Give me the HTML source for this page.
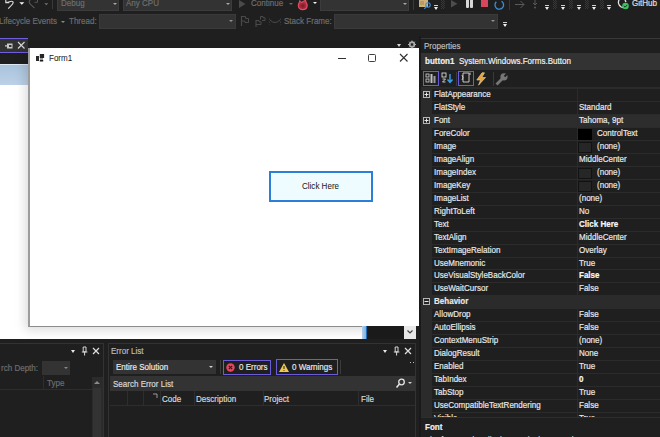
<!DOCTYPE html>
<html><head><meta charset="utf-8"><style>*{margin:0;padding:0;box-sizing:border-box}
html,body{width:660px;height:437px;overflow:hidden;background:#1f1f1f;font-family:"Liberation Sans",sans-serif}
.a{position:absolute;display:block}
.t{position:absolute;white-space:nowrap;font-size:9.5px;line-height:10px;transform:scaleX(.845);transform-origin:0 0;-webkit-text-stroke:0.2px currentColor}
</style></head><body>
<div class="a" style="left:0px;top:0px;width:660px;height:36px;background:#1f1f1f;"></div>
<svg class="a" style="left:0px;top:0px;" width="40" height="11" viewBox="0 0 40 11"><path d="M5.8 -0.5 L5.8 2.6 L9.2 2.6" fill="none" stroke="#dcdcdc" stroke-width="1.1"/><path d="M6.2 2.4 C9 2.6 11 0.2 12.8 1.6 C14 2.8 12.5 4.5 8.2 8.6" fill="none" stroke="#dcdcdc" stroke-width="1.2"/><path d="M37.5 -0.5 L37.5 2.3 L34.5 2.3" fill="none" stroke="#555" stroke-width="1"/><path d="M30.5 -0.5 C28.5 1.5 29 3 30.5 4.3 L34.5 8" fill="none" stroke="#555" stroke-width="1.1"/></svg>
<svg class="a" style="left:19px;top:2px;" width="6" height="4" viewBox="0 0 6 4"><path d="M0.3 0.3 L5.3 0.3 L2.8 2.8 Z" fill="#f4f4f4"/></svg>
<svg class="a" style="left:44px;top:2.5px;" width="5" height="3" viewBox="0 0 5 3"><path d="M0.3 0.3 L4.3 0.3 L2.3 2.3 Z" fill="#707070"/></svg>
<div class="a" style="left:52px;top:0px;width:1px;height:9px;background:#3a3a3a;"></div>
<div class="a" style="left:57px;top:0px;width:62px;height:11px;background:#333333;border:1px solid #3c3c3c;border-top:none"></div>
<div class="t" style="left:60.5px;top:-2.5px;color:#6e6e6e;">Debug</div>
<div class="a" style="left:113px;top:3px;width:0;height:0;border-left:2.0px solid transparent;border-right:2.0px solid transparent;border-top:2.5px solid #a8a8a8"></div>
<div class="a" style="left:123px;top:0px;width:109px;height:11px;background:#333333;border:1px solid #3c3c3c;border-top:none"></div>
<div class="t" style="left:125.5px;top:-2.5px;color:#6e6e6e;">Any CPU</div>
<div class="a" style="left:226px;top:3px;width:0;height:0;border-left:2.0px solid transparent;border-right:2.0px solid transparent;border-top:2.5px solid #a8a8a8"></div>
<svg class="a" style="left:238px;top:0px;" width="9" height="9" viewBox="0 0 9 9"><path d="M1 0 L7.5 4 L1 8 Z" fill="#4a4a4a"/></svg>
<div class="t" style="left:251px;top:-2.5px;color:#6e6e6e;">Continue</div>
<div class="a" style="left:289px;top:3px;width:0;height:0;border-left:2.0px solid transparent;border-right:2.0px solid transparent;border-top:2.5px solid #6a6a6a"></div>
<svg class="a" style="left:297px;top:-0.5px;" width="12" height="11" viewBox="0 0 12 11"><defs><radialGradient id="fl" cx="0.5" cy="0.6" r="0.5"><stop offset="0" stop-color="#7a1828"/><stop offset="1" stop-color="#b8384a"/></radialGradient></defs><path d="M5.8 9.6 C2.8 9.6 1.2 7.5 1.3 5.2 C1.4 3.6 2.4 2.4 2.8 0.8 C3.8 2.2 4.4 2.6 5 2.2 C6 1.4 7.2 0.9 8.6 0.3 C8.4 2.2 10.3 3.4 10.2 5.6 C10 8 8.4 9.6 5.8 9.6 Z" fill="url(#fl)" stroke="#e84a5e" stroke-width="1.1"/></svg>
<div class="a" style="left:312.5px;top:2.2px;width:0;height:0;border-left:2.25px solid transparent;border-right:2.25px solid transparent;border-top:2.8px solid #f4f4f4"></div>
<div class="a" style="left:320px;top:0px;width:89px;height:11px;background:#333333;border:1px solid #3c3c3c;border-top:none"></div>
<div class="a" style="left:403px;top:3px;width:0;height:0;border-left:2.0px solid transparent;border-right:2.0px solid transparent;border-top:2.5px solid #a8a8a8"></div>
<div class="a" style="left:413px;top:0px;width:1px;height:10px;background:#3a3a3a;"></div>
<svg class="a" style="left:418px;top:0px;" width="14" height="10" viewBox="0 0 14 10"><rect x="1" y="0" width="9" height="7" fill="#cdb27a"/><rect x="2" y="1" width="4" height="4" fill="#b89c64"/><circle cx="10" cy="5" r="2.2" fill="none" stroke="#3d8ee0" stroke-width="1.1"/><path d="M8.3 6.7 L6.3 8.8" stroke="#3d8ee0" stroke-width="1.2"/></svg>
<div class="a" style="left:434px;top:5px;width:4px;height:1px;background:#d0d0d0;"></div>
<div class="a" style="left:434px;top:7px;width:0;height:0;border-left:2.0px solid transparent;border-right:2.0px solid transparent;border-top:3px solid #f0f0f0"></div>
<div class="a" style="left:441px;top:0px;width:1px;height:1px;background:#383838;"></div>
<div class="a" style="left:443px;top:0px;width:1px;height:1px;background:#383838;"></div>
<div class="a" style="left:442px;top:1px;width:1px;height:1px;background:#383838;"></div>
<div class="a" style="left:444px;top:1px;width:1px;height:1px;background:#383838;"></div>
<div class="a" style="left:441px;top:2px;width:1px;height:1px;background:#383838;"></div>
<div class="a" style="left:443px;top:2px;width:1px;height:1px;background:#383838;"></div>
<div class="a" style="left:442px;top:3px;width:1px;height:1px;background:#383838;"></div>
<div class="a" style="left:444px;top:3px;width:1px;height:1px;background:#383838;"></div>
<div class="a" style="left:441px;top:4px;width:1px;height:1px;background:#383838;"></div>
<div class="a" style="left:443px;top:4px;width:1px;height:1px;background:#383838;"></div>
<div class="a" style="left:442px;top:5px;width:1px;height:1px;background:#383838;"></div>
<div class="a" style="left:444px;top:5px;width:1px;height:1px;background:#383838;"></div>
<div class="a" style="left:441px;top:6px;width:1px;height:1px;background:#383838;"></div>
<div class="a" style="left:443px;top:6px;width:1px;height:1px;background:#383838;"></div>
<div class="a" style="left:442px;top:7px;width:1px;height:1px;background:#383838;"></div>
<div class="a" style="left:444px;top:7px;width:1px;height:1px;background:#383838;"></div>
<div class="a" style="left:441px;top:8px;width:1px;height:1px;background:#383838;"></div>
<div class="a" style="left:443px;top:8px;width:1px;height:1px;background:#383838;"></div>
<svg class="a" style="left:450px;top:0px;" width="9" height="9" viewBox="0 0 9 9"><path d="M1 0 L7.5 3.8 L1 7.6 Z" fill="#4d4d4d"/></svg>
<div class="a" style="left:466px;top:0px;width:2.6px;height:7.5px;background:#d8d8d8;border-radius:0 0 1px 1px"></div>
<div class="a" style="left:470.4px;top:0px;width:2.6px;height:7.5px;background:#d8d8d8;border-radius:0 0 1px 1px"></div>
<div class="a" style="left:481px;top:0px;width:7px;height:7px;background:#d9455a;"></div>
<svg class="a" style="left:493px;top:0px;" width="13" height="11" viewBox="0 0 13 11"><path d="M8.5 1.2 A4.3 4.3 0 1 1 3.3 1.8" fill="none" stroke="#3c8fd8" stroke-width="1.3"/></svg>
<div class="a" style="left:509px;top:0px;width:1px;height:10px;background:#3a3a3a;"></div>
<svg class="a" style="left:514px;top:0px;" width="13" height="10" viewBox="0 0 13 10"><path d="M1 4.5 L10 4.5 M6.5 1 L10 4.5 L6.5 8" fill="none" stroke="#5a5a5a" stroke-width="1"/></svg>
<svg class="a" style="left:531px;top:0px;" width="8" height="10" viewBox="0 0 8 10"><path d="M4 0 L4 5 M2 3 L4 5 L6 3" fill="none" stroke="#5a5a5a" stroke-width="1"/><circle cx="4" cy="7.5" r="1" fill="#5a5a5a"/></svg>
<div class="a" style="left:545px;top:5px;width:4px;height:1px;background:#d0d0d0;"></div>
<div class="a" style="left:545px;top:7px;width:0;height:0;border-left:2.0px solid transparent;border-right:2.0px solid transparent;border-top:3px solid #f0f0f0"></div>
<div class="a" style="left:553px;top:0px;width:1px;height:1px;background:#383838;"></div>
<div class="a" style="left:555px;top:0px;width:1px;height:1px;background:#383838;"></div>
<div class="a" style="left:554px;top:1px;width:1px;height:1px;background:#383838;"></div>
<div class="a" style="left:556px;top:1px;width:1px;height:1px;background:#383838;"></div>
<div class="a" style="left:553px;top:2px;width:1px;height:1px;background:#383838;"></div>
<div class="a" style="left:555px;top:2px;width:1px;height:1px;background:#383838;"></div>
<div class="a" style="left:554px;top:3px;width:1px;height:1px;background:#383838;"></div>
<div class="a" style="left:556px;top:3px;width:1px;height:1px;background:#383838;"></div>
<div class="a" style="left:553px;top:4px;width:1px;height:1px;background:#383838;"></div>
<div class="a" style="left:555px;top:4px;width:1px;height:1px;background:#383838;"></div>
<div class="a" style="left:554px;top:5px;width:1px;height:1px;background:#383838;"></div>
<div class="a" style="left:556px;top:5px;width:1px;height:1px;background:#383838;"></div>
<div class="a" style="left:553px;top:6px;width:1px;height:1px;background:#383838;"></div>
<div class="a" style="left:555px;top:6px;width:1px;height:1px;background:#383838;"></div>
<div class="a" style="left:554px;top:7px;width:1px;height:1px;background:#383838;"></div>
<div class="a" style="left:556px;top:7px;width:1px;height:1px;background:#383838;"></div>
<div class="a" style="left:553px;top:8px;width:1px;height:1px;background:#383838;"></div>
<div class="a" style="left:555px;top:8px;width:1px;height:1px;background:#383838;"></div>
<div class="a" style="left:561px;top:5px;width:4px;height:1px;background:#d0d0d0;"></div>
<div class="a" style="left:561px;top:7px;width:0;height:0;border-left:2.0px solid transparent;border-right:2.0px solid transparent;border-top:3px solid #f0f0f0"></div>
<div class="a" style="left:569px;top:0px;width:1px;height:1px;background:#383838;"></div>
<div class="a" style="left:571px;top:0px;width:1px;height:1px;background:#383838;"></div>
<div class="a" style="left:570px;top:1px;width:1px;height:1px;background:#383838;"></div>
<div class="a" style="left:572px;top:1px;width:1px;height:1px;background:#383838;"></div>
<div class="a" style="left:569px;top:2px;width:1px;height:1px;background:#383838;"></div>
<div class="a" style="left:571px;top:2px;width:1px;height:1px;background:#383838;"></div>
<div class="a" style="left:570px;top:3px;width:1px;height:1px;background:#383838;"></div>
<div class="a" style="left:572px;top:3px;width:1px;height:1px;background:#383838;"></div>
<div class="a" style="left:569px;top:4px;width:1px;height:1px;background:#383838;"></div>
<div class="a" style="left:571px;top:4px;width:1px;height:1px;background:#383838;"></div>
<div class="a" style="left:570px;top:5px;width:1px;height:1px;background:#383838;"></div>
<div class="a" style="left:572px;top:5px;width:1px;height:1px;background:#383838;"></div>
<div class="a" style="left:569px;top:6px;width:1px;height:1px;background:#383838;"></div>
<div class="a" style="left:571px;top:6px;width:1px;height:1px;background:#383838;"></div>
<div class="a" style="left:570px;top:7px;width:1px;height:1px;background:#383838;"></div>
<div class="a" style="left:572px;top:7px;width:1px;height:1px;background:#383838;"></div>
<div class="a" style="left:569px;top:8px;width:1px;height:1px;background:#383838;"></div>
<div class="a" style="left:571px;top:8px;width:1px;height:1px;background:#383838;"></div>
<div class="a" style="left:577px;top:5px;width:4px;height:1px;background:#d0d0d0;"></div>
<div class="a" style="left:577px;top:7px;width:0;height:0;border-left:2.0px solid transparent;border-right:2.0px solid transparent;border-top:3px solid #f0f0f0"></div>
<div class="a" style="left:585px;top:0px;width:1px;height:1px;background:#383838;"></div>
<div class="a" style="left:587px;top:0px;width:1px;height:1px;background:#383838;"></div>
<div class="a" style="left:586px;top:1px;width:1px;height:1px;background:#383838;"></div>
<div class="a" style="left:588px;top:1px;width:1px;height:1px;background:#383838;"></div>
<div class="a" style="left:585px;top:2px;width:1px;height:1px;background:#383838;"></div>
<div class="a" style="left:587px;top:2px;width:1px;height:1px;background:#383838;"></div>
<div class="a" style="left:586px;top:3px;width:1px;height:1px;background:#383838;"></div>
<div class="a" style="left:588px;top:3px;width:1px;height:1px;background:#383838;"></div>
<div class="a" style="left:585px;top:4px;width:1px;height:1px;background:#383838;"></div>
<div class="a" style="left:587px;top:4px;width:1px;height:1px;background:#383838;"></div>
<div class="a" style="left:586px;top:5px;width:1px;height:1px;background:#383838;"></div>
<div class="a" style="left:588px;top:5px;width:1px;height:1px;background:#383838;"></div>
<div class="a" style="left:585px;top:6px;width:1px;height:1px;background:#383838;"></div>
<div class="a" style="left:587px;top:6px;width:1px;height:1px;background:#383838;"></div>
<div class="a" style="left:586px;top:7px;width:1px;height:1px;background:#383838;"></div>
<div class="a" style="left:588px;top:7px;width:1px;height:1px;background:#383838;"></div>
<div class="a" style="left:585px;top:8px;width:1px;height:1px;background:#383838;"></div>
<div class="a" style="left:587px;top:8px;width:1px;height:1px;background:#383838;"></div>
<div class="a" style="left:592px;top:5px;width:4px;height:1px;background:#d0d0d0;"></div>
<div class="a" style="left:592px;top:7px;width:0;height:0;border-left:2.0px solid transparent;border-right:2.0px solid transparent;border-top:3px solid #f0f0f0"></div>
<div class="a" style="left:600px;top:0px;width:1px;height:1px;background:#383838;"></div>
<div class="a" style="left:602px;top:0px;width:1px;height:1px;background:#383838;"></div>
<div class="a" style="left:601px;top:1px;width:1px;height:1px;background:#383838;"></div>
<div class="a" style="left:603px;top:1px;width:1px;height:1px;background:#383838;"></div>
<div class="a" style="left:600px;top:2px;width:1px;height:1px;background:#383838;"></div>
<div class="a" style="left:602px;top:2px;width:1px;height:1px;background:#383838;"></div>
<div class="a" style="left:601px;top:3px;width:1px;height:1px;background:#383838;"></div>
<div class="a" style="left:603px;top:3px;width:1px;height:1px;background:#383838;"></div>
<div class="a" style="left:600px;top:4px;width:1px;height:1px;background:#383838;"></div>
<div class="a" style="left:602px;top:4px;width:1px;height:1px;background:#383838;"></div>
<div class="a" style="left:601px;top:5px;width:1px;height:1px;background:#383838;"></div>
<div class="a" style="left:603px;top:5px;width:1px;height:1px;background:#383838;"></div>
<div class="a" style="left:600px;top:6px;width:1px;height:1px;background:#383838;"></div>
<div class="a" style="left:602px;top:6px;width:1px;height:1px;background:#383838;"></div>
<div class="a" style="left:601px;top:7px;width:1px;height:1px;background:#383838;"></div>
<div class="a" style="left:603px;top:7px;width:1px;height:1px;background:#383838;"></div>
<div class="a" style="left:600px;top:8px;width:1px;height:1px;background:#383838;"></div>
<div class="a" style="left:602px;top:8px;width:1px;height:1px;background:#383838;"></div>
<div class="a" style="left:607px;top:5px;width:4px;height:1px;background:#d0d0d0;"></div>
<div class="a" style="left:607px;top:7px;width:0;height:0;border-left:2.0px solid transparent;border-right:2.0px solid transparent;border-top:3px solid #f0f0f0"></div>
<svg class="a" style="left:617px;top:0px;" width="13" height="10" viewBox="0 0 13 10"><path d="M2 0 C1 2 1.5 5 3.5 6.5 C4.5 7.3 5 7.5 6 7.5" fill="none" stroke="#e6e6e6" stroke-width="1.4"/><path d="M8 0 L9 2" stroke="#e6e6e6" stroke-width="1.4"/><circle cx="8.5" cy="6" r="3.3" fill="#3cc060"/><path d="M6.8 6 L8.1 7.2 L10.2 4.9" fill="none" stroke="#1f1f1f" stroke-width="0.9"/></svg>
<div class="t" style="left:632px;top:-2px;color:#e0e0e0;">GitHub</div>
<div class="t" style="left:-1px;top:15.5px;color:#6e6e6e;">Lifecycle Events</div>
<div class="a" style="left:61px;top:20.5px;width:0;height:0;border-left:2.0px solid transparent;border-right:2.0px solid transparent;border-top:2px solid #8a8a8a"></div>
<div class="t" style="left:69px;top:15.5px;color:#6e6e6e;">Thread:</div>
<div class="a" style="left:99px;top:13.5px;width:137px;height:15px;background:#333333;border:1px solid #3a3a3a"></div>
<div class="a" style="left:229px;top:20px;width:0;height:0;border-left:2.0px solid transparent;border-right:2.0px solid transparent;border-top:2.5px solid #909090"></div>
<svg class="a" style="left:239px;top:15px;" width="12" height="12" viewBox="0 0 12 12"><path d="M2.5 1 L2.5 11" stroke="#4a4a4a" stroke-width="1.2"/><path d="M2.5 1.5 L6.5 1.5 L6.5 3.5 L9.5 3.5 L9.5 7.5 L6 7.5 L6 6 L2.5 6" fill="none" stroke="#4a4a4a" stroke-width="1"/></svg>
<svg class="a" style="left:254px;top:15px;" width="13" height="13" viewBox="0 0 13 13"><path d="M2 5 L2 12" stroke="#4a4a4a" stroke-width="1.1"/><path d="M2 5.5 L5 5.5 L5 6.8 L7 6.8 L7 9.5 L2 9.5" fill="none" stroke="#4a4a4a" stroke-width="1"/><path d="M6.5 4.5 L6.5 1.5 L9 1.5 L9 2.8 L11 2.8 L11 5.5 L8 5.5" fill="none" stroke="#4a4a4a" stroke-width="1"/></svg>
<svg class="a" style="left:268px;top:16px;" width="14" height="11" viewBox="0 0 14 11"><path d="M2 4 Q7 9 12 4" fill="none" stroke="#4a4a4a" stroke-width="1"/><path d="M1.5 2.5 L1.5 9 M12.5 2.5 L12.5 9" stroke="#3a3a3a" stroke-width="1" stroke-dasharray="1.5 1.5"/></svg>
<div class="t" style="left:284px;top:15.5px;color:#6e6e6e;">Stack Frame:</div>
<div class="a" style="left:334px;top:13.5px;width:164px;height:15px;background:#333333;border:1px solid #3a3a3a"></div>
<div class="a" style="left:491px;top:20px;width:0;height:0;border-left:2.0px solid transparent;border-right:2.0px solid transparent;border-top:2.5px solid #909090"></div>
<div class="a" style="left:503px;top:22px;width:4px;height:1px;background:#d0d0d0;"></div>
<div class="a" style="left:503px;top:24px;width:0;height:0;border-left:2.0px solid transparent;border-right:2.0px solid transparent;border-top:3px solid #f0f0f0"></div>
<div class="a" style="left:0px;top:48px;width:419px;height:291px;background:#ffffff;"></div>
<div class="a" style="left:0px;top:38px;width:28px;height:15px;background:#323232;border-top:1.7px solid #6f5ee0;border-bottom:1.5px solid #6f5ee0"></div>
<svg class="a" style="left:4px;top:41px;" width="10" height="10" viewBox="0 0 10 10"><path d="M1 4.8 L3 4.8" stroke="#c8c8c8" stroke-width="1.2"/><rect x="3" y="2.5" width="5.5" height="5" fill="#c8c8c8"/><rect x="5" y="4" width="2.5" height="2" fill="#323232"/></svg>
<svg class="a" style="left:16px;top:40px;" width="10" height="10" viewBox="0 0 10 10"><path d="M2 2 L8.5 8.5 M8.5 2 L2 8.5" stroke="#d8d8d8" stroke-width="1.1"/></svg>
<div class="a" style="left:0px;top:53px;width:28px;height:11px;background:#1f1f1f;"></div>
<div class="a" style="left:0px;top:64px;width:28px;height:21px;background:linear-gradient(#a9c3dd,#bcd1e7);border-top:1px solid #dde8f2"></div>
<div class="a" style="left:28px;top:48px;width:391px;height:279px;background:#ffffff;border-left:2px solid #9c9c9c;border-bottom:1.5px solid #8c8c8c;box-shadow:-3px 3px 10px rgba(0,0,0,0.14)"></div>
<svg class="a" style="left:35px;top:53px;" width="10" height="10" viewBox="0 0 10 10"><rect x="4.8" y="1" width="4.3" height="4" fill="#262626"/><rect x="5" y="5" width="3" height="2" fill="#9a9a9a"/><rect x="4.8" y="7" width="3.4" height="1.5" fill="#1a1a1a"/><rect x="1" y="3" width="3" height="5" fill="#2a2a2a"/></svg>
<div class="t" style="left:49px;top:52.5px;color:#1a1a1a;-webkit-text-stroke:0.05px #1a1a1a">Form1</div>
<div class="a" style="left:338px;top:58px;width:8px;height:1px;background:#303030;"></div>
<div class="a" style="left:368px;top:54px;width:8px;height:8px;background:transparent;border:1.2px solid #404040;border-radius:1.5px"></div>
<svg class="a" style="left:399px;top:53px;" width="10" height="10" viewBox="0 0 10 10"><path d="M1 1 L8.5 8.5 M8.5 1 L1 8.5" stroke="#303030" stroke-width="1.1"/></svg>
<div class="a" style="left:397px;top:44px;width:0;height:0;border-left:2.5px solid transparent;border-right:2.5px solid transparent;border-top:3px solid #d8d8d8"></div>
<svg class="a" style="left:407px;top:40px;" width="10" height="9" viewBox="0 0 10 9"><circle cx="5" cy="4.5" r="2.5" fill="none" stroke="#b0b0b0" stroke-width="1.3"/><path d="M5 0.5 L5 8.5 M1 4.5 L9 4.5 M2.2 1.7 L7.8 7.3 M7.8 1.7 L2.2 7.3" stroke="#b0b0b0" stroke-width="1"/><circle cx="5" cy="4.5" r="1.2" fill="#1f1f1f"/></svg>
<div class="a" style="left:269px;top:171px;width:104px;height:31px;background:#effcff;border:2px solid #2a7fd8;box-shadow:inset 0 0 0 1px #f8fdff"></div>
<div class="t" style="left:302px;top:181px;color:#222222;-webkit-text-stroke:0.05px #222">Click Here</div>
<div class="a" style="left:362px;top:326px;width:4px;height:13px;background:linear-gradient(90deg,#b4cfe8,#7fb0dc);"></div>
<div class="a" style="left:366px;top:326px;width:1px;height:13px;background:#1c6fb8;"></div>
<div class="a" style="left:367px;top:326px;width:37px;height:13px;background:#1a1a1a;"></div>
<div class="a" style="left:404px;top:326px;width:12px;height:13px;background:#e8e8e8;"></div>
<svg class="a" style="left:406px;top:328px;" width="8" height="8" viewBox="0 0 8 8"><path d="M1.5 2.5 L4 5 L6.5 2.5" fill="none" stroke="#404040" stroke-width="1.2"/></svg>
<div class="a" style="left:416px;top:326px;width:3px;height:13px;background:#1f1f1f;"></div>
<div class="a" style="left:419px;top:36px;width:241px;height:401px;background:#1f1f1f;"></div>
<div class="a" style="left:419px;top:36px;width:2px;height:401px;background:#1a1a1a;"></div>
<div class="a" style="left:421px;top:38px;width:239px;height:1px;background:#383838;"></div>
<div class="t" style="left:424px;top:40.5px;color:#bdbdbd;">Properties</div>
<div class="a" style="left:421px;top:53px;width:239px;height:17px;background:#333333;"></div>
<div class="t" style="left:425px;top:56px;color:#f0f0f0;"><b>button1</b>&nbsp; System.Windows.Forms.Button</div>
<div class="a" style="left:423px;top:71px;width:16px;height:15px;background:#1f1f1f;border:1px solid #6a5bd8"></div>
<svg class="a" style="left:425px;top:73px;" width="12" height="12" viewBox="0 0 12 12"><rect x="1" y="1" width="3" height="3" fill="none" stroke="#d8d8d8" stroke-width="0.8"/><rect x="1" y="6" width="3" height="3" fill="none" stroke="#d8d8d8" stroke-width="0.8"/><rect x="5.5" y="1" width="2" height="9" fill="#bfbfbf"/><rect x="8.5" y="3" width="2" height="7" fill="#9a9a9a"/></svg>
<svg class="a" style="left:441px;top:72px;" width="14" height="14" viewBox="0 0 14 14"><rect x="1" y="1" width="4" height="4" fill="none" stroke="#d8d8d8" stroke-width="0.9"/><path d="M1.5 7 L4.5 7 L1.5 10 L4.5 10" fill="none" stroke="#d8d8d8" stroke-width="0.9"/><path d="M9 2 L9 10 M6.5 7.5 L9 10.5 L11.5 7.5" fill="none" stroke="#3aa0e8" stroke-width="1.4"/></svg>
<div class="a" style="left:456px;top:72px;width:1px;height:14px;background:#3a3a3a;"></div>
<div class="a" style="left:458px;top:71px;width:16px;height:15px;background:#1f1f1f;border:1px solid #6a5bd8"></div>
<svg class="a" style="left:460px;top:72px;" width="12" height="12" viewBox="0 0 12 12"><path d="M3 1 L9 1 L9 10 L3 10 Z" fill="none" stroke="#d8d8d8" stroke-width="0.9"/><path d="M2 3 Q4 6 2 8" fill="none" stroke="#d8d8d8" stroke-width="0.9"/><path d="M10 0.5 L10 3" stroke="#d8d8d8" stroke-width="0.9"/></svg>
<svg class="a" style="left:475px;top:72px;" width="12" height="14" viewBox="0 0 12 14"><path d="M7 0.8 L1.8 8 L5.5 8 L3.5 13.2 L10.5 5.5 L6.8 5.5 L9.5 0.8 Z" fill="#e8a33a" stroke="#f2d6a6" stroke-width="0.6"/></svg>
<div class="a" style="left:493px;top:72px;width:1px;height:14px;background:#3a3a3a;"></div>
<svg class="a" style="left:495px;top:72px;" width="14" height="14" viewBox="0 0 14 14"><path d="M1.5 12.5 L7 7" stroke="#767676" stroke-width="2.8"/><circle cx="9" cy="4.8" r="3.6" fill="#767676"/><path d="M9.5 4.5 L12.5 1.5" stroke="#1f1f1f" stroke-width="2"/></svg>
<div class="a" style="left:421px;top:87px;width:239px;height:330px;background:#2b2b2b;"></div>
<div class="a" style="left:421px;top:87px;width:239px;height:1px;background:#2b2b2b;"></div>
<div class="a" style="left:432px;top:89px;width:228px;height:12px;background:#1f1f1f;"></div>
<div class="a" style="left:577px;top:89px;width:1px;height:12px;background:#2b2b2b;"></div>
<svg class="a" style="left:423px;top:91px;" width="7" height="7" viewBox="0 0 7 7"><rect x="0.5" y="0.5" width="6" height="6" fill="#262626" stroke="#b4b4b4" stroke-width="1"/><path d="M1.5 3.5 L5.5 3.5 M3.5 1.5 L3.5 5.5" stroke="#e8e8e8" stroke-width="1"/></svg>
<div class="t" style="left:434px;top:89.2px;color:#e8e8e8;">FlatAppearance</div>
<div class="a" style="left:432px;top:102px;width:228px;height:12px;background:#1f1f1f;"></div>
<div class="a" style="left:577px;top:102px;width:1px;height:12px;background:#2b2b2b;"></div>
<div class="t" style="left:434px;top:102.2px;color:#e8e8e8;">FlatStyle</div>
<div class="t" style="left:579px;top:102.2px;color:#e8e8e8;">Standard</div>
<div class="a" style="left:432px;top:115px;width:228px;height:12px;background:#2d2d2d;"></div>
<div class="a" style="left:577px;top:115px;width:1px;height:12px;background:#2b2b2b;"></div>
<svg class="a" style="left:423px;top:117px;" width="7" height="7" viewBox="0 0 7 7"><rect x="0.5" y="0.5" width="6" height="6" fill="#262626" stroke="#b4b4b4" stroke-width="1"/><path d="M1.5 3.5 L5.5 3.5 M3.5 1.5 L3.5 5.5" stroke="#e8e8e8" stroke-width="1"/></svg>
<div class="t" style="left:434px;top:115.2px;color:#e8e8e8;">Font</div>
<div class="t" style="left:579px;top:115.2px;color:#e8e8e8;">Tahoma, 9pt</div>
<div class="a" style="left:432px;top:128px;width:228px;height:12px;background:#1f1f1f;"></div>
<div class="a" style="left:577px;top:128px;width:1px;height:12px;background:#2b2b2b;"></div>
<div class="t" style="left:434px;top:128.2px;color:#e8e8e8;">ForeColor</div>
<div class="a" style="left:578px;top:129px;width:14px;height:10.5px;background:#000000;"></div>
<div class="t" style="left:597px;top:128.2px;color:#e8e8e8;">ControlText</div>
<div class="a" style="left:432px;top:141px;width:228px;height:12px;background:#1f1f1f;"></div>
<div class="a" style="left:577px;top:141px;width:1px;height:12px;background:#2b2b2b;"></div>
<div class="t" style="left:434px;top:141.2px;color:#e8e8e8;">Image</div>
<div class="a" style="left:578px;top:142px;width:14px;height:10.5px;background:#262626;border:1px solid #121212"></div>
<div class="t" style="left:597px;top:141.2px;color:#e8e8e8;">(none)</div>
<div class="a" style="left:432px;top:154px;width:228px;height:12px;background:#1f1f1f;"></div>
<div class="a" style="left:577px;top:154px;width:1px;height:12px;background:#2b2b2b;"></div>
<div class="t" style="left:434px;top:154.2px;color:#e8e8e8;">ImageAlign</div>
<div class="t" style="left:579px;top:154.2px;color:#e8e8e8;">MiddleCenter</div>
<div class="a" style="left:432px;top:167px;width:228px;height:12px;background:#1f1f1f;"></div>
<div class="a" style="left:577px;top:167px;width:1px;height:12px;background:#2b2b2b;"></div>
<div class="t" style="left:434px;top:167.2px;color:#e8e8e8;">ImageIndex</div>
<div class="a" style="left:578px;top:168px;width:14px;height:10.5px;background:#262626;border:1px solid #121212"></div>
<div class="t" style="left:597px;top:167.2px;color:#e8e8e8;">(none)</div>
<div class="a" style="left:432px;top:180px;width:228px;height:12px;background:#1f1f1f;"></div>
<div class="a" style="left:577px;top:180px;width:1px;height:12px;background:#2b2b2b;"></div>
<div class="t" style="left:434px;top:180.2px;color:#e8e8e8;">ImageKey</div>
<div class="a" style="left:578px;top:181px;width:14px;height:10.5px;background:#262626;border:1px solid #121212"></div>
<div class="t" style="left:597px;top:180.2px;color:#e8e8e8;">(none)</div>
<div class="a" style="left:432px;top:193px;width:228px;height:12px;background:#1f1f1f;"></div>
<div class="a" style="left:577px;top:193px;width:1px;height:12px;background:#2b2b2b;"></div>
<div class="t" style="left:434px;top:193.2px;color:#e8e8e8;">ImageList</div>
<div class="t" style="left:579px;top:193.2px;color:#e8e8e8;">(none)</div>
<div class="a" style="left:432px;top:206px;width:228px;height:12px;background:#1f1f1f;"></div>
<div class="a" style="left:577px;top:206px;width:1px;height:12px;background:#2b2b2b;"></div>
<div class="t" style="left:434px;top:206.2px;color:#e8e8e8;">RightToLeft</div>
<div class="t" style="left:579px;top:206.2px;color:#e8e8e8;">No</div>
<div class="a" style="left:432px;top:219px;width:228px;height:12px;background:#1f1f1f;"></div>
<div class="a" style="left:577px;top:219px;width:1px;height:12px;background:#2b2b2b;"></div>
<div class="t" style="left:434px;top:219.2px;color:#e8e8e8;">Text</div>
<div class="t" style="left:579px;top:219.2px;color:#f8f8f8;font-weight:bold">Click Here</div>
<div class="a" style="left:432px;top:232px;width:228px;height:12px;background:#1f1f1f;"></div>
<div class="a" style="left:577px;top:232px;width:1px;height:12px;background:#2b2b2b;"></div>
<div class="t" style="left:434px;top:232.2px;color:#e8e8e8;">TextAlign</div>
<div class="t" style="left:579px;top:232.2px;color:#e8e8e8;">MiddleCenter</div>
<div class="a" style="left:432px;top:245px;width:228px;height:12px;background:#1f1f1f;"></div>
<div class="a" style="left:577px;top:245px;width:1px;height:12px;background:#2b2b2b;"></div>
<div class="t" style="left:434px;top:245.2px;color:#e8e8e8;">TextImageRelation</div>
<div class="t" style="left:579px;top:245.2px;color:#e8e8e8;">Overlay</div>
<div class="a" style="left:432px;top:258px;width:228px;height:11px;background:#1f1f1f;"></div>
<div class="a" style="left:577px;top:258px;width:1px;height:11px;background:#2b2b2b;"></div>
<div class="t" style="left:434px;top:258.2px;color:#e8e8e8;">UseMnemonic</div>
<div class="t" style="left:579px;top:258.2px;color:#e8e8e8;">True</div>
<div class="a" style="left:432px;top:270px;width:228px;height:12px;background:#1f1f1f;"></div>
<div class="a" style="left:577px;top:270px;width:1px;height:12px;background:#2b2b2b;"></div>
<div class="t" style="left:434px;top:270.2px;color:#e8e8e8;">UseVisualStyleBackColor</div>
<div class="t" style="left:579px;top:270.2px;color:#f8f8f8;font-weight:bold">False</div>
<div class="a" style="left:432px;top:283px;width:228px;height:12px;background:#1f1f1f;"></div>
<div class="a" style="left:577px;top:283px;width:1px;height:12px;background:#2b2b2b;"></div>
<div class="t" style="left:434px;top:283.2px;color:#e8e8e8;">UseWaitCursor</div>
<div class="t" style="left:579px;top:283.2px;color:#e8e8e8;">False</div>
<svg class="a" style="left:423px;top:298px;" width="7" height="7" viewBox="0 0 7 7"><rect x="0.5" y="0.5" width="6" height="6" fill="#262626" stroke="#b4b4b4" stroke-width="1"/><path d="M1.5 3.5 L5.5 3.5" stroke="#e8e8e8" stroke-width="1"/></svg>
<div class="t" style="left:434px;top:296.2px;color:#e8e8e8;font-weight:bold">Behavior</div>
<div class="a" style="left:432px;top:309px;width:228px;height:12px;background:#1f1f1f;"></div>
<div class="a" style="left:577px;top:309px;width:1px;height:12px;background:#2b2b2b;"></div>
<div class="t" style="left:434px;top:309.2px;color:#e8e8e8;">AllowDrop</div>
<div class="t" style="left:579px;top:309.2px;color:#e8e8e8;">False</div>
<div class="a" style="left:432px;top:322px;width:228px;height:12px;background:#1f1f1f;"></div>
<div class="a" style="left:577px;top:322px;width:1px;height:12px;background:#2b2b2b;"></div>
<div class="t" style="left:434px;top:322.2px;color:#e8e8e8;">AutoEllipsis</div>
<div class="t" style="left:579px;top:322.2px;color:#e8e8e8;">False</div>
<div class="a" style="left:432px;top:335px;width:228px;height:12px;background:#1f1f1f;"></div>
<div class="a" style="left:577px;top:335px;width:1px;height:12px;background:#2b2b2b;"></div>
<div class="t" style="left:434px;top:335.2px;color:#e8e8e8;">ContextMenuStrip</div>
<div class="t" style="left:579px;top:335.2px;color:#e8e8e8;">(none)</div>
<div class="a" style="left:432px;top:348px;width:228px;height:12px;background:#1f1f1f;"></div>
<div class="a" style="left:577px;top:348px;width:1px;height:12px;background:#2b2b2b;"></div>
<div class="t" style="left:434px;top:348.2px;color:#e8e8e8;">DialogResult</div>
<div class="t" style="left:579px;top:348.2px;color:#e8e8e8;">None</div>
<div class="a" style="left:432px;top:361px;width:228px;height:12px;background:#1f1f1f;"></div>
<div class="a" style="left:577px;top:361px;width:1px;height:12px;background:#2b2b2b;"></div>
<div class="t" style="left:434px;top:361.2px;color:#e8e8e8;">Enabled</div>
<div class="t" style="left:579px;top:361.2px;color:#e8e8e8;">True</div>
<div class="a" style="left:432px;top:374px;width:228px;height:12px;background:#1f1f1f;"></div>
<div class="a" style="left:577px;top:374px;width:1px;height:12px;background:#2b2b2b;"></div>
<div class="t" style="left:434px;top:374.2px;color:#e8e8e8;">TabIndex</div>
<div class="t" style="left:579px;top:374.2px;color:#f8f8f8;font-weight:bold">0</div>
<div class="a" style="left:432px;top:387px;width:228px;height:12px;background:#1f1f1f;"></div>
<div class="a" style="left:577px;top:387px;width:1px;height:12px;background:#2b2b2b;"></div>
<div class="t" style="left:434px;top:387.2px;color:#e8e8e8;">TabStop</div>
<div class="t" style="left:579px;top:387.2px;color:#e8e8e8;">True</div>
<div class="a" style="left:432px;top:400px;width:228px;height:12px;background:#1f1f1f;"></div>
<div class="a" style="left:577px;top:400px;width:1px;height:12px;background:#2b2b2b;"></div>
<div class="t" style="left:434px;top:400.2px;color:#e8e8e8;">UseCompatibleTextRendering</div>
<div class="t" style="left:579px;top:400.2px;color:#e8e8e8;">False</div>
<div class="a" style="left:432px;top:413px;width:228px;height:12px;background:#1f1f1f;"></div>
<div class="a" style="left:577px;top:413px;width:1px;height:12px;background:#2b2b2b;"></div>
<div class="t" style="left:434px;top:413.2px;color:#e8e8e8;">Visible</div>
<div class="t" style="left:579px;top:413.2px;color:#e8e8e8;">True</div>
<div class="a" style="left:421px;top:417px;width:239px;height:20px;background:#1f1f1f;"></div>
<div class="a" style="left:421px;top:417px;width:239px;height:1px;background:#2e2e2e;"></div>
<div class="t" style="left:425px;top:422px;color:#f0f0f0;font-weight:bold">Font</div>
<div class="t" style="left:425px;top:434.5px;color:#d0d0d0;">The font used to display text in the control.</div>
<div class="a" style="left:0px;top:339px;width:419px;height:98px;background:#1f1f1f;"></div>
<div class="a" style="left:-1px;top:343px;width:105px;height:94px;background:#1f1f1f;border:1px solid #333333;border-bottom:none"></div>
<div class="a" style="left:71px;top:349.5px;width:0;height:0;border-left:2.5px solid transparent;border-right:2.5px solid transparent;border-top:3px solid #e8e8e8"></div>
<svg class="a" style="left:81px;top:346px;" width="7" height="10" viewBox="0 0 7 10"><path d="M2.2 1 L5 1 L5 5.8 L2.2 5.8 Z" fill="none" stroke="#d8d8d8" stroke-width="1"/><path d="M0.8 6 L6.4 6 M3.6 6 L3.6 9.5" stroke="#d8d8d8" stroke-width="1"/></svg>
<svg class="a" style="left:92px;top:347px;" width="8" height="8" viewBox="0 0 8 8"><path d="M1 1 L7 7 M7 1 L1 7" stroke="#e0e0e0" stroke-width="1.2"/></svg>
<div class="t" style="left:1px;top:362.5px;color:#6e6e6e;">rch Depth:</div>
<div class="a" style="left:42px;top:361px;width:28px;height:14px;background:#333333;"></div>
<div class="a" style="left:64px;top:367px;width:0;height:0;border-left:2.0px solid transparent;border-right:2.0px solid transparent;border-top:2px solid #888888"></div>
<div class="a" style="left:0px;top:376px;width:92px;height:14px;background:#1f1f1f;"></div>
<div class="a" style="left:43px;top:376px;width:1px;height:14px;background:#2e2e2e;"></div>
<div class="t" style="left:47px;top:378px;color:#6e6e6e;">Type</div>
<div class="a" style="left:0px;top:389px;width:92px;height:1px;background:#2e2e2e;"></div>
<div class="a" style="left:92px;top:377px;width:11px;height:60px;background:#2b2b2b;"></div>
<div class="a" style="left:93px;top:388px;width:8px;height:49px;background:#333333;"></div>
<svg class="a" style="left:93px;top:380px;" width="8" height="5" viewBox="0 0 8 5"><path d="M1 4 L4 1 L7 4 Z" fill="#8a8a8a"/></svg>
<div class="a" style="left:108px;top:343px;width:308px;height:94px;background:#1f1f1f;border:1px solid #333333;border-bottom:none"></div>
<div class="t" style="left:111px;top:346px;color:#bcbcbc;">Error List</div>
<div class="a" style="left:383px;top:349.5px;width:0;height:0;border-left:2.5px solid transparent;border-right:2.5px solid transparent;border-top:3px solid #e8e8e8"></div>
<svg class="a" style="left:393px;top:346px;" width="7" height="10" viewBox="0 0 7 10"><path d="M2.2 1 L5 1 L5 5.8 L2.2 5.8 Z" fill="none" stroke="#d8d8d8" stroke-width="1"/><path d="M0.8 6 L6.4 6 M3.6 6 L3.6 9.5" stroke="#d8d8d8" stroke-width="1"/></svg>
<svg class="a" style="left:404px;top:347px;" width="8" height="8" viewBox="0 0 8 8"><path d="M1 1 L7 7 M7 1 L1 7" stroke="#e0e0e0" stroke-width="1.2"/></svg>
<div class="a" style="left:113px;top:360px;width:103px;height:14px;background:#333333;"></div>
<div class="t" style="left:116px;top:361.5px;color:#e8e8e8;">Entire Solution</div>
<div class="a" style="left:209px;top:366px;width:0;height:0;border-left:2.0px solid transparent;border-right:2.0px solid transparent;border-top:2.5px solid #d0d0d0"></div>
<div class="a" style="left:220px;top:360px;width:1px;height:14px;background:#3a3a3a;"></div>
<div class="a" style="left:223px;top:360px;width:48px;height:15px;background:#1f1f1f;border:1px solid #6a5bd8"></div>
<svg class="a" style="left:225px;top:362px;" width="11" height="11" viewBox="0 0 11 11"><circle cx="5.5" cy="5.5" r="4.2" fill="#e8485c"/><path d="M3.8 3.8 L7.2 7.2 M7.2 3.8 L3.8 7.2" stroke="#1f1f1f" stroke-width="1.1"/></svg>
<div class="t" style="left:239px;top:361.5px;color:#e8e8e8;">0 Errors</div>
<div class="a" style="left:276px;top:359px;width:62px;height:16px;background:#1f1f1f;border:1px solid #6a5bd8"></div>
<svg class="a" style="left:278px;top:362px;" width="12" height="11" viewBox="0 0 12 11"><path d="M6 1 L11 10 L1 10 Z" fill="#f0c850"/><path d="M6 4 L6 7 M6 8.2 L6 9" stroke="#1f1f1f" stroke-width="1"/></svg>
<div class="t" style="left:292px;top:361.5px;color:#e8e8e8;">0 Warnings</div>
<div class="a" style="left:340px;top:360px;width:1px;height:14px;background:#3a3a3a;"></div>
<div class="a" style="left:410px;top:362px;width:1px;height:1px;background:#bdbdbd;"></div>
<div class="a" style="left:413px;top:362px;width:1px;height:1px;background:#bdbdbd;"></div>
<div class="a" style="left:110px;top:376px;width:305px;height:15px;background:#333333;"></div>
<div class="t" style="left:113px;top:378.5px;color:#d8d8d8;">Search Error List</div>
<svg class="a" style="left:395px;top:378px;" width="11" height="11" viewBox="0 0 11 11"><circle cx="6.5" cy="4" r="2.8" fill="none" stroke="#e6e6e6" stroke-width="1.3"/><path d="M4.5 6 L1.5 9.5" stroke="#e6e6e6" stroke-width="1.6"/></svg>
<div class="a" style="left:408px;top:382px;width:0;height:0;border-left:2.0px solid transparent;border-right:2.0px solid transparent;border-top:2.5px solid #d0d0d0"></div>
<div class="a" style="left:127px;top:391px;width:1px;height:14px;background:#2e2e2e;"></div>
<div class="a" style="left:143px;top:391px;width:1px;height:14px;background:#2e2e2e;"></div>
<div class="a" style="left:160px;top:391px;width:1px;height:14px;background:#2e2e2e;"></div>
<div class="a" style="left:194px;top:391px;width:1px;height:14px;background:#2e2e2e;"></div>
<div class="a" style="left:263px;top:391px;width:1px;height:14px;background:#2e2e2e;"></div>
<div class="a" style="left:358px;top:391px;width:1px;height:14px;background:#2e2e2e;"></div>
<div class="a" style="left:110px;top:405px;width:305px;height:1px;background:#2e2e2e;"></div>
<svg class="a" style="left:152px;top:393px;" width="6" height="6" viewBox="0 0 6 6"><path d="M1 1 L5 1 L5 5" fill="none" stroke="#9a9a9a" stroke-width="1"/></svg>
<div class="t" style="left:162px;top:394px;color:#d8d8d8;">Code</div>
<div class="t" style="left:196px;top:394px;color:#d8d8d8;">Description</div>
<div class="t" style="left:264px;top:394px;color:#d8d8d8;">Project</div>
<div class="t" style="left:361px;top:394px;color:#d8d8d8;">File</div>
</body></html>
